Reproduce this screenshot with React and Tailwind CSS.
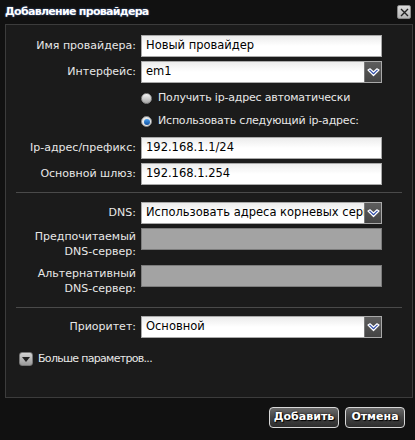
import React from "react";

const font = { fontFamily: "'DejaVu Sans', Verdana, sans-serif" };

function Chevron() {
  return (
    <svg width="13" height="9" viewBox="0 0 13 9">
      <polygon
        points="1,2 3,0.8 6.5,4 10,0.8 12,2 6.5,7.5"
        fill="#2b4aa8"
        stroke="#ffffff"
        strokeWidth="1.2"
        strokeLinejoin="round"
      />
    </svg>
  );
}

function TextInput({ value }) {
  return (
    <div className="h-[22px] w-[241px] border border-[#a9a9a9] bg-gradient-to-b from-[#ececec] via-white to-white flex items-center pl-[4px] text-[11.5px] text-black">
      {value}
    </div>
  );
}

function Select({ value }) {
  return (
    <div className="h-[22px] w-[241px] border border-[#a9a9a9] bg-gradient-to-b from-[#ececec] via-white to-white flex items-center text-[11.5px] text-black">
      <div className="flex-1 pl-[4px] overflow-hidden whitespace-nowrap">{value}</div>
      <div className="h-full w-[17px] bg-gradient-to-b from-[#5e5e5e] to-[#444] border-l border-[#7a7a7a] flex items-center justify-center">
        <Chevron />
      </div>
    </div>
  );
}

function Disabled() {
  return <div className="h-[22px] w-[241px] border border-[#7c7c7c] bg-[#a3a3a3]" />;
}

function Row({ label, children }) {
  return (
    <div className="flex items-center gap-[5px]">
      <div className="w-[120px] text-right text-[11px] text-[#e8e8e8] whitespace-nowrap">{label}</div>
      {children}
    </div>
  );
}

function TallRow({ l1, l2 }) {
  return (
    <div className="flex items-start gap-[5px] h-[33px]">
      <div className="w-[120px] text-right text-[11px] leading-[15px] pt-[1px] text-[#e8e8e8] whitespace-nowrap">
        {l1}
        <br />
        {l2}
      </div>
      <Disabled />
    </div>
  );
}

function Radio({ checked, label }) {
  return (
    <div className="flex items-center h-[23px] pl-[125px] gap-[6px]">
      {checked ? (
        <div className="w-[11px] h-[11px] rounded-full bg-[#e8e8e8] border border-[#888] flex items-center justify-center">
          <div className="w-[6px] h-[6px] rounded-full bg-gradient-to-b from-[#4aa0f0] to-[#0f4f9e]" />
        </div>
      ) : (
        <div className="w-[11px] h-[11px] rounded-full bg-gradient-to-b from-[#f4f4f4] to-[#a8a8a8] border border-[#8a8a8a]" />
      )}
      <span className="text-[11px] tracking-[-0.2px] text-[#e8e8e8] whitespace-nowrap">{label}</span>
    </div>
  );
}

function Separator() {
  return <div className="h-px bg-[#4a4a4a]" />;
}

function Button({ children, w }) {
  return (
    <button
      className={`${w} h-[21px] rounded-[4px] border border-[#d8d8d8] bg-gradient-to-b from-[#6a6a6a] via-[#454545] to-[#2c2c2c] text-[11px] font-bold text-white [text-shadow:0_0_2px_#000,1px_1px_1px_#000]`}
    >
      {children}
    </button>
  );
}

export default function App() {
  return (
    <div className="w-[415px] h-[440px] bg-[#111111] flex flex-col" style={font}>
      <div className="h-[24px] flex items-center justify-between pl-[5px] pr-[4px]">
        <span className="text-[11px] font-bold tracking-[-0.7px] text-white [text-shadow:0_0_2px_#4a6fb0]">
          Добавление провайдера
        </span>
        <div className="w-[14px] h-[14px] rounded-[2px] bg-gradient-to-b from-[#dcdcdc] to-[#b4b4b4] border border-[#888] flex items-center justify-center">
          <svg width="9" height="9" viewBox="0 0 9 9">
            <path d="M1 1 L8 8 M8 1 L1 8" stroke="#222" strokeWidth="1.4" />
          </svg>
        </div>
      </div>

      <div className="ml-[5px] w-[408px] h-[374px] border border-[#3c3c3c] bg-[#1b1b1b] px-[10px] pt-[10px] flex flex-col">
        <div className="flex flex-col gap-[4px]">
          <Row label="Имя провайдера:">
            <TextInput value="Новый провайдер" />
          </Row>
          <Row label="Интерфейс:">
            <Select value="em1" />
          </Row>
        </div>
        <div className="mt-[4px]">
          <Radio label="Получить ip-адрес автоматически" />
          <Radio checked label="Использовать следующий ip-адрес:" />
        </div>
        <div className="mt-[4px] flex flex-col gap-[4px]">
          <Row label="Ip-адрес/префикс:">
            <TextInput value="192.168.1.1/24" />
          </Row>
          <Row label="Основной шлюз:">
            <TextInput value="192.168.1.254" />
          </Row>
        </div>
        <div className="mt-[7px] mb-[9px]">
          <Separator />
        </div>
        <div className="flex flex-col gap-[4px]">
          <Row label="DNS:">
            <Select value="Использовать адреса корневых серверов" />
          </Row>
          <TallRow l1="Предпочитаемый" l2="DNS-сервер:" />
          <TallRow l1="Альтернативный" l2="DNS-сервер:" />
        </div>
        <div className="mt-[9px] mb-[8px]">
          <Separator />
        </div>
        <Row label="Приоритет:">
          <Select value="Основной" />
        </Row>
        <div className="mt-[13px] flex items-center gap-[5px] pl-[3px]">
          <div className="w-[14px] h-[14px] rounded-[3px] bg-gradient-to-b from-[#d4d4d4] to-[#9a9a9a] border border-[#777] flex items-center justify-center">
            <svg width="8" height="5" viewBox="0 0 8 5">
              <polygon points="0,0 8,0 4,5" fill="#222" />
            </svg>
          </div>
          <span className="text-[11px] tracking-[-0.7px] text-[#e8e8e8]">Больше параметров...</span>
        </div>
      </div>

      <div className="flex justify-end gap-[6px] pr-[10px] pt-[9px]">
        <Button w="w-[70px]">Добавить</Button>
        <Button w="w-[60px]">Отмена</Button>
      </div>
    </div>
  );
}
